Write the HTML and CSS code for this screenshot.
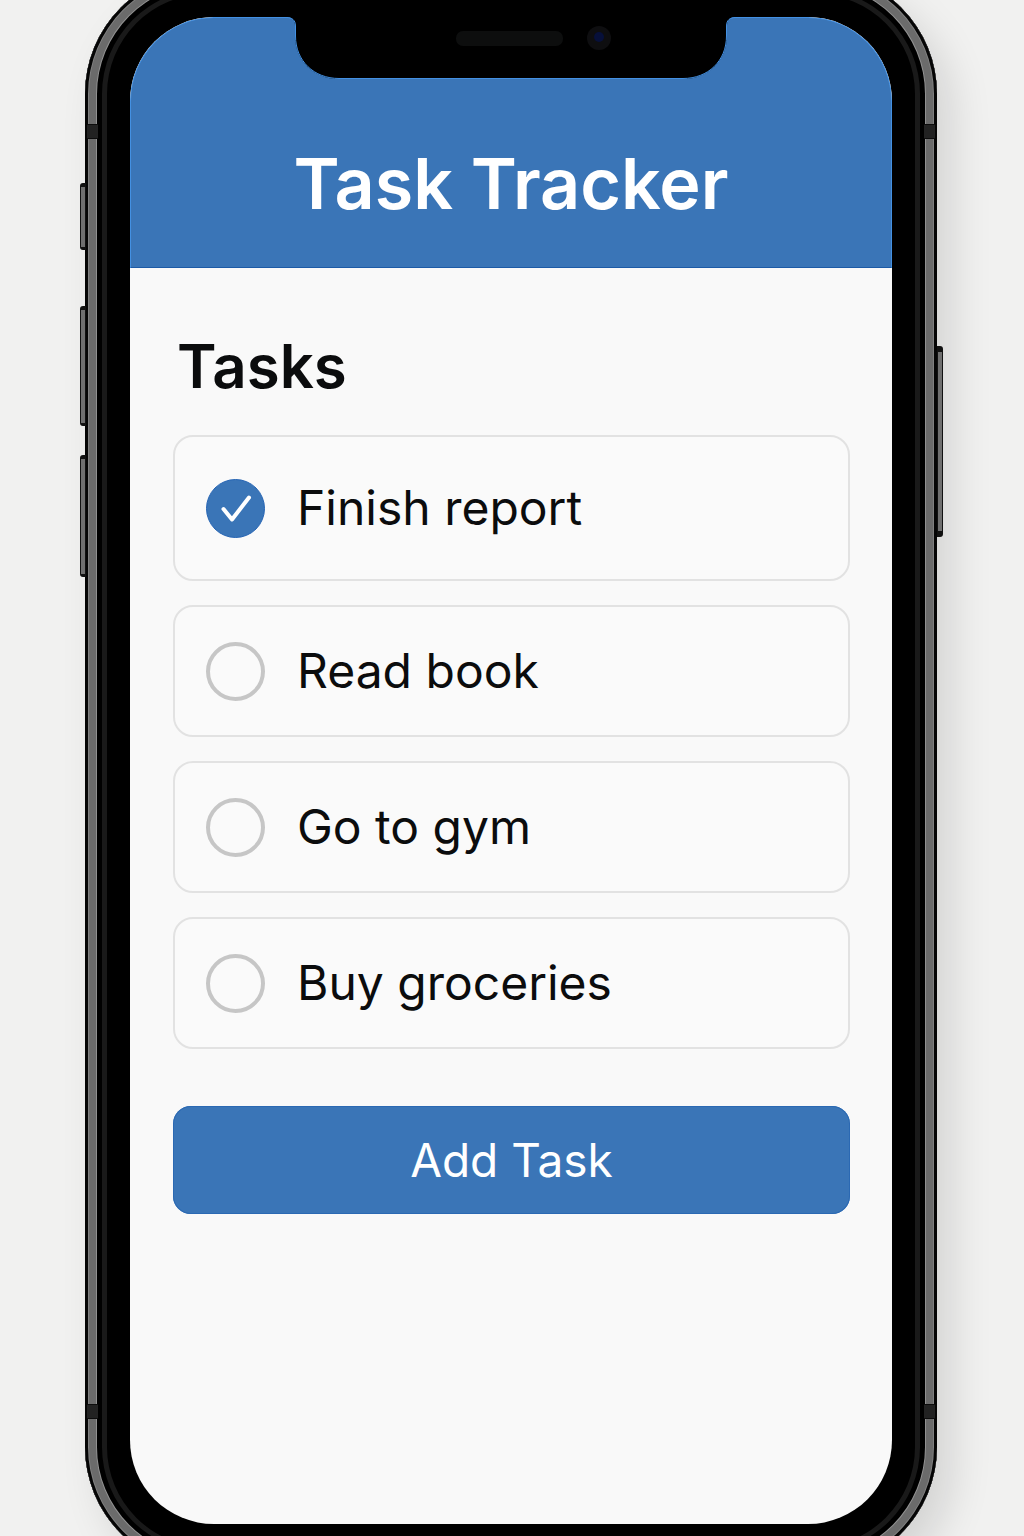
FILE: index.html
```html
<!DOCTYPE html>
<html lang="en">
<head>
<meta charset="utf-8">
<meta name="viewport" content="width=device-width, initial-scale=1">
<title>Task Tracker</title>
<link rel="stylesheet" href="styles.css">
</head>
<body>
<div class="stage">
  <div class="phone">
    <span class="key key-mute"></span>
    <span class="key key-up"></span>
    <span class="key key-down"></span>
    <span class="key key-power"></span>
    <span class="band band-left band-top"></span>
    <span class="band band-right band-top"></span>
    <span class="band band-left band-bottom"></span>
    <span class="band band-right band-bottom"></span>

    <div class="screen">
      <header class="header">
        <svg class="notch" viewBox="0 0 450 63" aria-hidden="true">
          <path class="notch-body" d="M0 0C6 0 9 3 9 9V19C9 44 28 62 53 62H397C422 62 441 44 441 19V9C441 3 444 0 450 0Z"/>
          <path class="notch-edge" d="M0 .5C6 .5 9.500 3 9.500 9V19C9.500 44 28 61.500 53 61.500H397C422 61.500 440.500 44 440.500 19V9C440.500 3 444 .5 450 .5"/>
          <rect class="speaker" x="170" y="14" width="107" height="15" rx="7"/>
          <circle class="camera" cx="313" cy="21" r="12"/>
          <circle class="lens" cx="313" cy="20" r="5"/>
        </svg>
        <h1 class="title">Task Tracker</h1>
      </header>

      <main class="content">
        <h2 class="heading">Tasks</h2>
        <ul class="tasks">
          <li><label class="task task-done">
            <span class="tick">
              <input class="box" type="checkbox" checked>
              <svg class="mark" viewBox="0 0 59 59" aria-hidden="true"><path d="M17.500 30L26 40.500L43 18.500"/></svg>
            </span>
            <span class="name">Finish report</span>
          </label></li>
          <li><label class="task">
            <span class="tick">
              <input class="box" type="checkbox">
              <svg class="mark" viewBox="0 0 59 59" aria-hidden="true"><path d="M17.500 30L26 40.500L43 18.500"/></svg>
            </span>
            <span class="name">Read book</span>
          </label></li>
          <li><label class="task">
            <span class="tick">
              <input class="box" type="checkbox">
              <svg class="mark" viewBox="0 0 59 59" aria-hidden="true"><path d="M17.500 30L26 40.500L43 18.500"/></svg>
            </span>
            <span class="name">Go to gym</span>
          </label></li>
          <li><label class="task">
            <span class="tick">
              <input class="box" type="checkbox">
              <svg class="mark" viewBox="0 0 59 59" aria-hidden="true"><path d="M17.500 30L26 40.500L43 18.500"/></svg>
            </span>
            <span class="name">Buy groceries</span>
          </label></li>
        </ul>
        <button class="add" type="button">Add Task</button>
      </main>
    </div>
  </div>
</div>
</body>
</html>
```
FILE: styles.css
```css
* { box-sizing: border-box; }

body {
  margin: 0;
  background: #f1f1f0;
  color: #0b0c0d;
  font-family: Inter, "Liberation Sans", sans-serif;
}

.stage {
  display: flex;
  min-height: 100vh;
  padding: 0 87px 0 85px;
  overflow: hidden;
}

/* The handset is cropped by the window at the top and bottom. */
.phone {
  position: relative;
  flex: 1;
  margin: -28px 0 -33px;
  padding: 45px;
  border-radius: 122px;
  background: #000;
  box-shadow:
    inset 0 0 0 3px #050505,
    inset 0 0 0 4px #808080,
    inset 0 0 0 11px #6b6b6b,
    inset 0 0 0 12px #909090,
    inset 0 0 0 17px #000,
    inset 0 0 0 22px #191919,
    16px 20px 40px rgba(0, 0, 0, .12);
}

.key {
  position: absolute;
  left: -5px;
  width: 6px;
  border: 1px solid #111;
  border-top-width: 4px;
  border-bottom-width: 3px;
  border-radius: 3px 0 0 3px;
  background: #6f6f6f;
}
.key-mute { top: 211px; height: 67px; }
.key-up { top: 334px; height: 120px; }
.key-down { top: 483px; height: 122px; }
.key-power {
  top: 374px;
  left: auto;
  right: -6px;
  height: 191px;
  border-top-width: 6px;
  border-bottom-width: 6px;
  border-radius: 0 3px 3px 0;
}

.band {
  position: absolute;
  width: 11px;
  height: 15px;
  border: solid #0c0c0c;
  border-width: 1px 0;
  background: #222;
}
.band-left { left: 2px; }
.band-right { right: 2px; }
.band-top { top: 152px; }
.band-bottom { bottom: 150px; }

.screen {
  min-height: calc(100vh - 29px);
  border-radius: 84px;
  background: #f9f9f9;
  overflow: hidden;
}

.header {
  height: 251px;
  border: 1px solid #4390e2;
  border-bottom-color: #1c5aa6;
  border-radius: 84px 84px 0 0;
  background: #3a75b7;
  color: #fff;
}

.notch {
  display: block;
  width: 450px;
  max-width: 100%;
  height: 63px;
  margin: -1px auto 0;
}
.notch-body { fill: #000; }
.notch-edge { fill: none; stroke: #4390e2; }
.speaker { fill: #0d0e0e; }
.camera { fill: #0e0e10; }
.lens { fill: #07103a; }

.title {
  margin: 60px 0 0;
  font-size: 70px;
  font-weight: 600;
  line-height: 88px;
  text-align: center;
}

.content { padding: 60px 42px 60px 43px; }

.heading {
  margin: 0 4px 31px;
  font-size: 60px;
  font-weight: 600;
  line-height: 76px;
}

.tasks {
  display: grid;
  gap: 24px;
  margin: 0 0 57px;
  padding: 0;
  list-style: none;
}

.task {
  display: flex;
  align-items: center;
  gap: 32px;
  min-height: 132px;
  padding: 0 31px;
  border: 2px solid #e2e2e2;
  border-radius: 20px;
  background: #fafafa;
}
.task-done { min-height: 146px; }

.tick {
  display: grid;
  flex: none;
  width: 59px;
  height: 59px;
}
.box, .mark { grid-area: 1 / 1; }
.box {
  width: 59px;
  height: 59px;
  margin: 0;
  appearance: none;
  border: 4px solid #c6c6c6;
  border-radius: 50%;
}
.box:checked {
  border: 1px solid #2564b4;
  background: #3a75b7;
}
.mark {
  fill: none;
  stroke: #fff;
  stroke-width: 4;
  stroke-linecap: round;
  stroke-linejoin: round;
  pointer-events: none;
  visibility: hidden;
}
.box:checked + .mark { visibility: visible; }

.name { font-size: 48px; line-height: 60px; }

.add {
  display: block;
  width: 100%;
  padding: 24px;
  border: 0;
  border-radius: 18px;
  background: #3a75b7;
  box-shadow: inset 0 0 0 1px #2b69b3;
  color: #fff;
  font: 400 46px/60px Inter, "Liberation Sans", sans-serif;
}
```
